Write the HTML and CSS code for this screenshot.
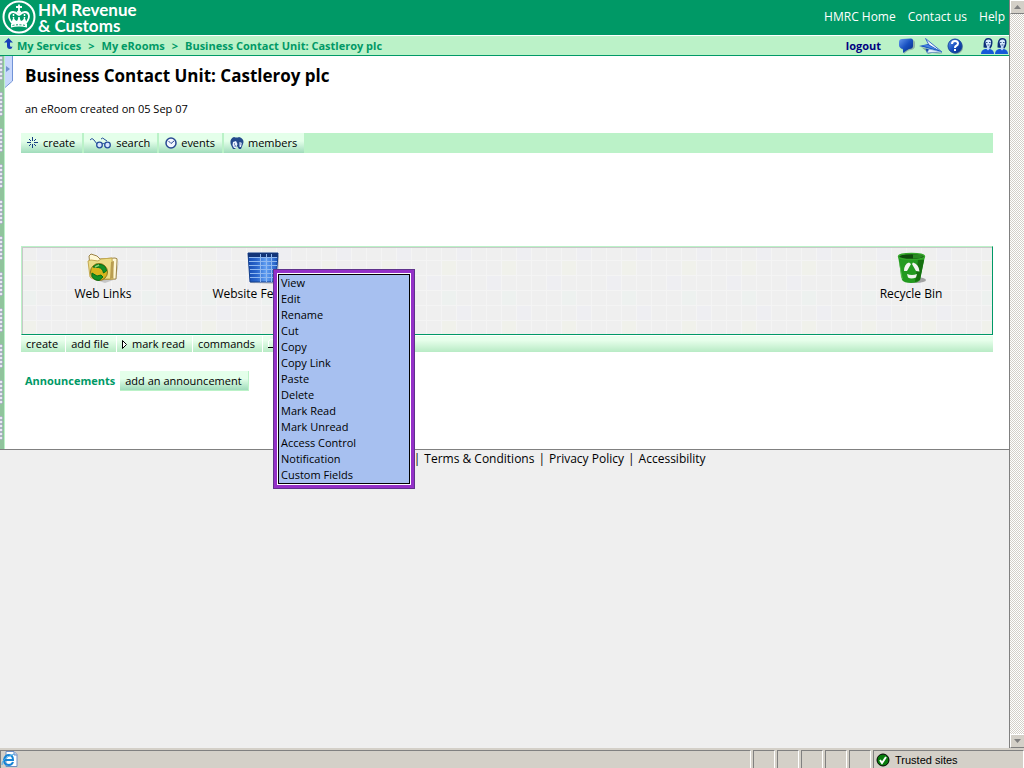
FILE: index.html
```html
<!DOCTYPE html>
<html lang="en">
<head>
    <meta charset="UTF-8">
    <meta name="viewport" content="width=device-width, initial-scale=1.0">
    <title>Business Contact Unit: Castleroy plc</title>
    <link rel="stylesheet" href="styles.css">
</head>
<body>
    <div class="viewport">
        <div class="content">
            <header class="banner">
                <a href="#" class="logo">
                    <svg width="34" height="34" viewBox="0 0 34 34" fill="none" stroke="#fff">
                        <circle cx="17" cy="17" r="15.5" stroke-width="2"/>
                        <path d="M17 4.500v6M14 7h6" stroke-width="1.800"/>
                        <path d="M10 23C5 17 7 12 11 12q3 0 5.500 3M24 23c5-6 3-11-1-11q-3 0-5.500 3" stroke-width="1.800"/>
                        <circle cx="17" cy="12" r="1.500" fill="#fff"/>
                        <path d="M17 14v7M11.500 14v4M22.500 14v4" stroke-dasharray="2 1" stroke-width="1.500"/>
                        <path d="M10 21l1.500-4 1.500 3 2 1 2-4 2 4 2-1 1.500-3 1.500 4v3H10z" fill="#fff" stroke="none"/>
                        <path d="M9 23.500q8-2 16 0v4q-8-2-16 0z" fill="#fff" stroke="none"/>
                        <path d="M10.500 25.500q6.500-1.500 13 0" stroke="#096" stroke-dasharray="2 1.500"/>
                    </svg>
                    <span class="logo-text"><span>HM Revenue</span><span>&amp; Customs</span></span>
                </a>
                <nav class="banner-links">
                    <a href="#">HMRC Home</a>
                    <a href="#">Contact us</a>
                    <a href="#">Help</a>
                </nav>
            </header>

            <div class="crumb-bar">
                <nav class="crumbs">
                    <svg width="10" height="12" viewBox="0 0 10 12"><path d="M4.500 0L0 4.500h3V8q0 3 3 3 2 0 2.500-2.500Q6 9.500 6 7.500v-3h3z" fill="#1740b8"/></svg>
                    <a href="#">My Services</a>
                    <span class="sep">&gt;</span>
                    <a href="#">My eRooms</a>
                    <span class="sep">&gt;</span>
                    <a href="#">Business Contact Unit: Castleroy plc</a>
                </nav>
                <div class="tools">
                    <a href="#" class="logout">logout</a>
                    <button class="icon-button" aria-label="Comment">
                        <svg width="17" height="16" viewBox="0 0 17 16">
                            <defs><linearGradient id="blue" x1="0" y1="0" x2="1" y2="1"><stop offset="0" stop-color="#689aef"/><stop offset=".5" stop-color="#174fc0"/><stop offset="1" stop-color="#062b7c"/></linearGradient></defs>
                            <path d="M6 16v-4q-4-1-4-4V4q0-2 3-2h9q3 0 3 3v3q0 3-4 4-3 0-7 4z" fill="#8fb5a5"/>
                            <path d="M5 15v-4Q1 10 1 7V4q0-3 3-3l9-.5q2 0 2 2V8q0 3-4 3-2 1-6 4z" fill="url(#blue)"/>
                        </svg>
                    </button>
                    <button class="icon-button" aria-label="Send">
                        <svg width="24" height="16" viewBox="0 0 24 16">
                            <path d="M2 9l22 7-11-1-4 1-2-3z" fill="#84a99a"/>
                            <path d="M6.500.5L23 14l-12-5z" fill="#f5f9ff" stroke="#3b6fc8"/>
                            <path d="M0 8l9-2 14 8z" fill="#1b55c0"/>
                            <path d="M3 7.500l6-.5 10 5z" fill="#4b86e2"/>
                            <path d="M6.500 10.500l3.500.5-2 4z" fill="#174aa8"/>
                            <path d="M10 11l13 3-11 .5-4 .5z" fill="#e5eefc" stroke="#3b6fc8" stroke-width=".5"/>
                        </svg>
                    </button>
                    <button class="icon-button" aria-label="Help">
                        <svg width="17" height="16" viewBox="0 0 17 16">
                            <circle cx="9" cy="9" r="7" fill="#84a99a"/>
                            <circle cx="8" cy="8" r="7" fill="url(#blue)" stroke="#1646a0"/>
                            <path d="M5 6q0-3 3-3t3 2.500q0 1.500-2 2.500-1 .5-1 2M8 11v2" fill="none" stroke="#fff" stroke-width="2"/>
                        </svg>
                    </button>
                    <button class="icon-button members-here" aria-label="Members">
                        <svg width="28" height="16" viewBox="0 0 28 16">
                            <g id="person">
                                <path d="M0 16q0-4 4-5h5q4 1 4 5z" fill="#1659d8"/>
                                <path d="M2.500 9.500Q2 0 7 0t4.500 5q0 3-2 5.500z" fill="#0c2e7b"/>
                                <path d="M4.500 4q0-2.500 3-2.500T10 5 7.500 9 4.500 4z" fill="#d7ebff"/>
                                <path d="M6 8h2.500v3L7 12.500 5.500 11z" fill="#bfd9fa"/>
                                <path d="M5 4.500h1.500M8 4.500h1.500M6.500 7h2" stroke="#35558e"/>
                            </g>
                            <use href="#person" x="14"/>
                        </svg>
                    </button>
                </div>
            </div>

            <main class="page">
                <div class="binding"></div>
                <button class="side-tab" aria-label="Open sidebar">
                    <svg width="8" height="32" viewBox="0 0 8 32"><path d="M0 0h7v25l-7 6z" fill="#c8d8fc"/><path d="M7.500 0v25L0 31.500" fill="none" stroke="#7193d7"/><path d="M1 10l4 3-4 3z" fill="#7193cf"/></svg>
                </button>
                <div class="room">
                    <h1>Business Contact Unit: Castleroy plc</h1>
                    <p class="created">an eRoom created on 05 Sep 07</p>

                    <div class="toolbar">
                        <button>
                            <svg width="12" height="12" viewBox="0 0 12 12" stroke="#173f83"><path d="M5.500 0v4M5.500 7v4M0 5.500h4M7 5.500h4M2 2l2 2M7 7l2 2M9 2L7 4M4 7L2 9"/></svg>
                            create
                        </button>
                        <button>
                            <svg width="22" height="12" viewBox="0 0 22 12" fill="none" stroke="#274f9c"><path d="M0 3q2-3 4 0l3 4M11 2q2-2 3 0l3 2"/><circle cx="9.500" cy="8" r="2.800" fill="#d8e7ff" stroke-width="1.300"/><circle cx="17.500" cy="8" r="2.800" fill="#d8e7ff" stroke-width="1.300"/><path d="M12 7q1-1 3 0"/></svg>
                            search
                        </button>
                        <button>
                            <svg width="12" height="12" viewBox="0 0 12 12"><circle cx="6" cy="6" r="5" fill="#f3f7ff" stroke="#294993" stroke-width="1.500"/><path d="M3.500 4l2.500 2.500L9 4" fill="none" stroke="#294993"/></svg>
                            events
                        </button>
                        <button>
                            <svg width="14" height="12" viewBox="0 0 14 12"><path d="M1 8Q-1 2 4 0q3 1 5 0 6 2 4 7l-2 5H9L7 9l-2 3H3z" fill="#234a8c"/><path d="M3 5l3-1 1.500 3L6 11H4L2.500 8zM9.500 5L12 6l-1 4-1.500 0z" fill="#e8f0ff"/><path d="M4 7h1M10.500 7h1M4.500 9h1.500" stroke="#234a8c"/></svg>
                            members
                        </button>
                    </div>

                    <div class="item-box">
                        <svg class="weave" width="100%" height="100%">
                            <defs>
                                <pattern id="tiles" x="-2" y="-3" width="60" height="60" patternUnits="userSpaceOnUse">
                                    <path d="M0 0h60v60H0z" fill="#efefef"/>
                                    <path d="M15 0h15v15H15zM45 30h15v15H45z" fill="#eeeef2"/>
                                    <path d="M0 15h15v15H0z" fill="#f0f1eb"/>
                                    <path d="M0 45h15v15H0z" fill="#edf1ef"/>
                                    <path d="M0 .5h60M0 15.500h60M0 30.500h60M0 45.500h60M.5 0v60M15.500 0v60M30.500 0v60M45.500 0v60" stroke="#f4f4f4"/>
                                </pattern>
                            </defs>
                            <rect width="100%" height="100%" fill="url(#tiles)"/>
                        </svg>
                        <a href="#" class="item">
                            <svg width="32" height="32" viewBox="0 0 32 32">
                                <path d="M3 26l24 2 5-20-3 19-11 4z" fill="#aaa" opacity=".6"/>
                                <path d="M2 4l2-2 6 2 3 3 15-1q3 0 2 3l-1 18-19 1L4 25z" fill="#fff8d5" stroke="#9c8347"/>
                                <path d="M1 9l3-1 7 1 3-2 11-1 1 21H6L3 25z" fill="#ecdc86" stroke="#c3a850"/>
                                <path d="M24 10l3-1-1 17-3 1z" fill="#b99d50"/>
                                <circle cx="12" cy="20" r="8.500" fill="#d8b51b" stroke="#89761b"/>
                                <path d="M6 15q3-4 8-2.500 5 1 5.500 6.500l-3 2q-1-5-5-5.500zM5 21l5 3 4-1 2 2-4 3.500q-5 0-7-4z" fill="#149124" stroke="#087018"/>
                                <path d="M8 15l4-2" stroke="#8ed070" stroke-width="1.500"/>
                            </svg>
                            <span>Web Links</span>
                        </a>
                        <div class="item selected">
                            <a href="#" class="item">
                                <svg width="32" height="32" viewBox="0 0 32 32">
                                    <defs><linearGradient id="sheet" x1="0" y1="0" x2="1" y2="0"><stop offset="0" stop-color="#164db5"/><stop offset=".3" stop-color="#2a66cc"/><stop offset=".6" stop-color="#62a1f4"/><stop offset="1" stop-color="#1853bc"/></linearGradient></defs>
                                    <path d="M3 30l28 1V4l1-1-1 29-27-1z" fill="#888" opacity=".5"/>
                                    <path d="M1 1h30l-2 29H3z" fill="url(#sheet)" stroke="#123f8d"/>
                                    <path d="M1 1h30v4H1z" fill="#123579"/>
                                    <path d="M2 5.500h28M2 9.500h28M2 13.500h28M3 17.500h27M3 21.500h26M3 25.500h26M13.500 2v28M19.500 2v28M24.500 2v28" stroke="#8fb8f0"/>
                                </svg>
                                <span>Website Feedback</span>
                            </a>
                            <div class="menu">
                                <button>View</button>
                                <button>Edit</button>
                                <button>Rename</button>
                                <button>Cut</button>
                                <button>Copy</button>
                                <button>Copy Link</button>
                                <button>Paste</button>
                                <button>Delete</button>
                                <button>Mark Read</button>
                                <button>Mark Unread</button>
                                <button>Access Control</button>
                                <button>Notification</button>
                                <button>Custom Fields</button>
                            </div>
                        </div>
                        <a href="#" class="item bin">
                            <svg width="32" height="32" viewBox="0 0 32 32">
                                <ellipse cx="21" cy="28" rx="10" ry="3" fill="#555" opacity=".5"/>
                                <path d="M3 4l4 24q2 3 9 3t9-3l5-24z" fill="#239a20"/>
                                <path d="M23 8h6l-4 20-5 2z" fill="#15700f"/>
                                <path d="M4 8l4 20-2-3z" fill="#58bd4c"/>
                                <ellipse cx="16.500" cy="4.500" rx="13" ry="3" fill="#104b0d" stroke="#35a82b" stroke-width="1.500"/>
                                <path d="M18 2.500h8l2 2-4 2h-6z" fill="#2a8a22"/>
                                <path d="M9 19q0-7 5-8.500l2 1.500-4 7zM18 10.500q6 2 6.500 9l-3.500-.5-4-7zM12 22q5 2 10 0l-1 3.500q-5 2-8 0z" fill="#f1f4f0"/>
                            </svg>
                            <span>Recycle Bin</span>
                        </a>
                    </div>

                    <div class="command-bar">
                        <button>create</button>
                        <button>add file</button>
                        <button><svg width="6" height="9" viewBox="0 0 6 9"><path d="M.5.5v8l4-4z" fill="#fff" stroke="#000"/></svg>mark read</button>
                        <button>commands</button>
                        <button aria-label="View"><svg width="12" height="10" viewBox="0 0 12 10" fill="none"><path d="M.5 8V2l2-1.500h3l1 2h4" stroke="#fff"/><path d="M0 8.500h10.500V3" stroke="#000"/></svg></button>
                    </div>

                    <div class="announcements">
                        <h2>Announcements</h2>
                        <button>add an announcement</button>
                    </div>
                </div>
            </main>

            <footer class="footer">
                <a href="#">Terms &amp; Conditions</a>
                <a href="#">Privacy Policy</a>
                <a href="#">Accessibility</a>
            </footer>
        </div>
        <div class="scrollbar">
            <button aria-label="Scroll up"><svg width="7" height="4" viewBox="0 0 7 4"><path d="M0 4h7L3.500 0z" fill="#808080"/></svg></button>
            <button aria-label="Scroll down"><svg width="7" height="4" viewBox="0 0 7 4"><path d="M0 0h7L3.500 4z" fill="#808080"/></svg></button>
        </div>
    </div>

    <div class="status-bar">
        <div class="pane page-pane">
            <svg width="17" height="16" viewBox="0 0 17 16">
                <path d="M5 .5h8l3 3v12H5z" fill="#fff" stroke="#6f8fc4"/>
                <path d="M13 1v3h3" fill="#bcd4f3" stroke="#6f8fc4"/>
                <path d="M3 9h9q0-5-4-5T3 9q0 5 5 5 3 0 4-3" fill="none" stroke="#1684d5" stroke-width="2"/>
                <path d="M1 14Q0 8 13 3" fill="none" stroke="#48aeea"/>
            </svg>
        </div>
        <div class="pane"></div>
        <div class="pane"></div>
        <div class="pane"></div>
        <div class="pane"></div>
        <div class="pane"></div>
        <div class="pane zone">
            <svg width="14" height="14" viewBox="0 0 14 14"><circle cx="7" cy="7" r="6" fill="#087b0d" stroke="#000"/><path d="M4 7l2 3 4-6" fill="none" stroke="#fff" stroke-width="2"/></svg>
            Trusted sites
        </div>
    </div>
</body>
</html>
```

FILE: styles.css
```css
* {
    box-sizing: border-box;
}

body {
    margin: 0;
    height: 100vh;
    display: flex;
    flex-direction: column;
    background-color: #efefef;
    font-family: "Open Sans", sans-serif;
    font-size: 11px;
    line-height: 16px;
    color: #000;
}

a {
    color: inherit;
    text-decoration: none;
}

button {
    margin: 0;
    padding: 0;
    border: none;
    background: none;
    font: inherit;
    color: inherit;
    cursor: pointer;
}

svg {
    display: block;
    flex: none;
}

.viewport {
    flex: 1;
    min-height: 0;
    display: flex;
}

.content {
    flex: 1;
    min-width: 0;
}

/* header */
.banner {
    display: flex;
    justify-content: space-between;
    height: 36px;
    padding: 0 4px 0 2px;
    background-color: #009966;
    border-bottom: 1px solid #fff;
    color: #fff;
}

.logo {
    display: flex;
    gap: 2px;
}

.logo-text {
    display: flex;
    flex-direction: column;
    padding-top: 2px;
    font-family: Lato, sans-serif;
    font-weight: bold;
    font-size: 17px;
    line-height: 16px;
}

.banner-links {
    display: flex;
    gap: 12px;
    padding-top: 9px;
    font-size: 12px;
}

.crumb-bar {
    display: flex;
    justify-content: space-between;
    height: 20px;
    background-color: #bbf2c8;
    border-bottom: 1px solid #009966;
    font-weight: bold;
    line-height: 19px;
}

.crumbs {
    display: flex;
    gap: 7px;
    padding-left: 4px;
    color: #009966;
}

.crumbs svg {
    margin: 2px -4px 0 0;
}

.tools {
    display: flex;
    align-items: center;
    gap: 4px;
}

.logout {
    margin-right: 13px;
    color: #000080;
}

.members-here {
    margin-left: 13px;
}

/* room page */
.page {
    display: flex;
    height: 394px;
    background-color: #fff;
    border-bottom: 1px solid #808080;
}

.binding {
    width: 5px;
    border-right: 1px solid #bbf2c8;
    background:
        repeating-linear-gradient(transparent 0 24px, #90c49c 24px 36px),
        radial-gradient(circle at 1px 2px, #e8eaf2 1px, #8288a4 2px, #90c49c 2px) 0 0 / 4px 4px;
}

.side-tab {
    align-self: flex-start;
}

.room {
    flex: 1;
    min-width: 0;
    padding: 8px 16px 0 8px;
}

h1 {
    margin: 0;
    padding-left: 4px;
    font-size: 17px;
    line-height: 24px;
}

.created {
    margin: 13px 0 16px;
    padding-left: 4px;
}

.toolbar {
    display: flex;
    height: 20px;
    margin-bottom: 93px;
    background-color: #bbf2c8;
}

.toolbar button {
    display: flex;
    align-items: center;
    gap: 4px;
    padding: 0 7px 0 6px;
    border-right: 2px solid #bbf2c8;
    background: linear-gradient(#e4ffea 40%, #a0dcbb);
}

.item-box {
    position: relative;
    display: flex;
    height: 89px;
    padding: 5px 40px 0 40px;
    border: 1px solid #009966;
    border-top-color: #bbf2c8;
    border-left-color: #bbf2c8;
    box-shadow: inset 1px 1px #c8c8c8;
    font-size: 12px;
}

.weave {
    position: absolute;
    left: 0;
    top: 0;
    padding: 1px 0 0 1px;
}

.item {
    position: relative;
    display: flex;
    flex-direction: column;
    align-items: center;
    gap: 2px;
    width: 82px;
    white-space: nowrap;
}

.selected {
    margin-left: 78px;
}

.bin {
    margin-left: auto;
}

/* pop-up menu of the selected item */
.menu {
    position: absolute;
    left: 51px;
    top: 17px;
    z-index: 1;
    width: 142px;
    padding: 1px;
    border: 4px solid #9430c8;
    outline: 1px solid #60338c;
    outline-offset: -1px;
    background-color: #fff;
    font-size: 11px;
}

.menu button {
    display: block;
    width: 100%;
    height: 16px;
    padding: 0 2px;
    border: solid #000;
    border-width: 0 1px;
    background-color: #a7c0f0;
    line-height: 16px;
    text-align: left;
}

.menu button:first-child {
    height: 17px;
    border-top-width: 1px;
}

.menu button:last-child {
    height: 17px;
    border-bottom-width: 1px;
}

.command-bar {
    display: flex;
    height: 17px;
    border-top: 1px solid #fff;
    background: linear-gradient(#e8ffec 25%, #b8ebc5);
}

.command-bar button {
    display: flex;
    align-items: center;
    gap: 4px;
    padding: 0 7px 0 5px;
    border-right: 1px solid #fff;
}

.announcements {
    display: flex;
    align-items: center;
    gap: 5px;
    margin-top: 19px;
    padding-left: 4px;
}

h2 {
    margin: 0;
    font-size: 11px;
    line-height: 20px;
    color: #009966;
}

.announcements button {
    height: 20px;
    padding: 0 6px 0 5px;
    border-right: 1px solid #bbf2c8;
    border-bottom: 1px solid #bbf2c8;
    background: linear-gradient(#e4ffea 40%, #a0dcbb);
}

.footer {
    display: flex;
    gap: 4px;
    padding: 1px 0 0 41%;
    font-size: 12px;
}

.footer a::before {
    content: "|";
    margin-right: 4px;
}

/* browser frame */
.scrollbar {
    display: flex;
    flex-direction: column;
    justify-content: space-between;
    width: 15px;
    border-left: 1px solid #808080;
    background: repeating-conic-gradient(#fff 0 25%, #d4d0c8 0 50%) 0 0 / 2px 2px;
}

.scrollbar button {
    display: flex;
    align-items: center;
    justify-content: center;
    height: 14px;
    border-top: 1px solid #fff;
    border-left: 1px solid #fff;
    border-bottom: 1px solid #808080;
    background-color: #d4d0c8;
}

.status-bar {
    display: flex;
    gap: 2px;
    height: 20px;
    padding-top: 2px;
    background-color: #d4d0c8;
    font-family: "Liberation Sans", sans-serif;
}

.pane {
    width: 22px;
    border: 1px solid #808080;
    border-right-color: #fff;
    border-bottom: none;
}

.page-pane {
    flex: 1;
}

.zone {
    display: flex;
    align-items: center;
    gap: 5px;
    width: 151px;
    padding-left: 2px;
}
```
